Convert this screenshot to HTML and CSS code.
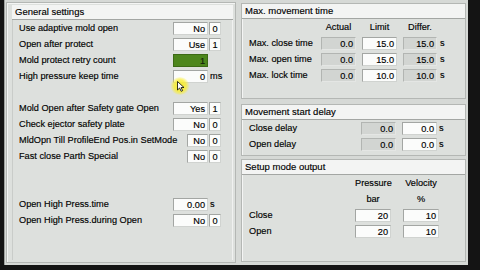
FILE: index.html
```html
<!DOCTYPE html>
<html>
<head>
<meta charset="utf-8">
<link rel="stylesheet" href="styles.css">
</head>
<body>
<div class="screen">
  <div class="desk">
    <section class="panel left">
      <div class="ph">General settings</div>
      <div class="pb">
        <div class="row"><span class="lbl">Use adaptive mold open</span><span class="vals"><span class="box wide">No</span><span class="box sm">0</span></span></div>
        <div class="row"><span class="lbl">Open after protect</span><span class="vals"><span class="box wide">Use</span><span class="box sm">1</span></span></div>
        <div class="row"><span class="lbl">Mold protect retry count</span><span class="vals"><span class="box wide green">1</span></span></div>
        <div class="row"><span class="lbl">High pressure keep time</span><span class="vals"><span class="box wide">0</span><span class="unit">ms</span></span></div>
        <div class="row"></div>
        <div class="row"><span class="lbl">Mold Open after Safety gate Open</span><span class="vals"><span class="box wide">Yes</span><span class="box sm">1</span></span></div>
        <div class="row"><span class="lbl">Check ejector safety plate</span><span class="vals"><span class="box wide">No</span><span class="box sm">0</span></span></div>
        <div class="row"><span class="lbl">MldOpn Till ProfileEnd Pos.in SetMode</span><span class="vals"><span class="box narrow">No</span><span class="box sm">0</span></span></div>
        <div class="row"><span class="lbl">Fast close Parth Special</span><span class="vals"><span class="box narrow">No</span><span class="box sm">0</span></span></div>
        <div class="row"></div>
        <div class="row"></div>
        <div class="row"><span class="lbl">Open High Press.time</span><span class="vals"><span class="box wide">0.00</span><span class="unit">s</span></span></div>
        <div class="row"><span class="lbl">Open High Press.during Open</span><span class="vals"><span class="box wide">No</span><span class="box sm">0</span></span></div>
      </div>
    </section>
    <div class="col">
      <section class="panel p1">
        <div class="ph">Max. movement time</div>
        <div class="grid g1">
          <span></span><span class="ch">Actual</span><span class="ch">Limit</span><span class="ch">Differ.</span><span></span>
          <span class="lbl">Max. close time</span><span class="box ro">0.0</span><span class="box">15.0</span><span class="box ro">15.0</span><span class="unit">s</span>
          <span class="lbl">Max. open time</span><span class="box ro">0.0</span><span class="box">15.0</span><span class="box ro">15.0</span><span class="unit">s</span>
          <span class="lbl">Max. lock time</span><span class="box ro">0.0</span><span class="box">10.0</span><span class="box ro">10.0</span><span class="unit">s</span>
        </div>
      </section>
      <section class="panel p2">
        <div class="ph">Movement start delay</div>
        <div class="grid g2">
          <span class="lbl">Close delay</span><span class="box ro">0.0</span><span class="box">0.0</span><span class="unit">s</span>
          <span class="lbl">Open delay</span><span class="box ro">0.0</span><span class="box">0.0</span><span class="unit">s</span>
        </div>
      </section>
      <section class="panel p3">
        <div class="ph">Setup mode output</div>
        <div class="grid g3">
          <span></span><span class="ch">Pressure</span><span class="ch">Velocity</span>
          <span></span><span class="ch">bar</span><span class="ch">%</span>
          <span class="lbl">Close</span><span class="box">20</span><span class="box">10</span>
          <span class="lbl">Open</span><span class="box">20</span><span class="box">10</span>
        </div>
      </section>
    </div>
  </div>
  <div class="hl"></div>
  <svg class="cursor" width="8" height="11" viewBox="0 0 8 11"><path d="M0.5 0.5 L0.5 9 L2.6 7 L4.2 10.3 L5.6 9.6 L4.1 6.5 L7 6.5 Z" fill="#fff" stroke="#000" stroke-width="0.8"/></svg>
</div>
</body>
</html>
```

FILE: styles.css
```css
* { box-sizing: border-box; }
html, body { margin: 0; padding: 0; background: #151515; }
body {
  font-family: "Liberation Sans", Arial, sans-serif;
  font-size: 9.2px;
  color: #000;
  -webkit-text-stroke: 0.15px #000;
}

.screen {
  position: relative;
  width: 480px;
  height: 270px;
  background: #141414;
  padding: 0 12px 5px 4px;
}
.desk {
  height: 100%;
  background: #d6d9d6;
  display: flex;
  gap: 5px;
  padding: 2px 2px 2px 1px;
  border-left: 1px solid #9ea19e;
}

.panel {
  background: #dde0dd;
  border: 1px solid #b4b7b4;
  box-shadow: inset 1px 1px 0 #f4f5f4;
}
.left {
  width: 231px;
  padding: 2px 2px 0 5px;
}
.ph {
  height: 15px;
  line-height: 14px;
  font-size: 9.5px;
  background: #f3f4f3;
  border-bottom: 1px solid #a3a6a3;
  padding-left: 3px;
  white-space: nowrap;
}
.left .pb {
  height: calc(100% - 17px);
  border-left: 1px solid #c9ccc9;
  border-right: 1px solid #f0f1f0;
}

.row {
  display: flex;
  align-items: center;
  height: 16px;
  padding-left: 6px;
}
.lbl { white-space: nowrap; }
.row .lbl { width: 154px; flex: none; }
.vals {
  display: flex;
  align-items: center;
  gap: 1px;
}
.box {
  display: block;
  height: 13px;
  line-height: 12px;
  text-align: right;
  padding-right: 2px;
  background: #fbfcfb;
  border: 1px solid #a3a6a3;
  border-right-color: #d0d3d0;
  border-bottom-color: #d0d3d0;
  white-space: nowrap;
}
.box.wide { width: 35px; }
.box.narrow { width: 21px; margin-left: 14px; }
.box.sm { width: 12px; text-align: center; padding-right: 0; }
.box.green { background: #4d861c; border-color: #3c6a15; color: #1b2a10; }
.box.ro { background: #d2d5d2; border-color: #b2b5b2; border-right-color: #e4e6e4; border-bottom-color: #e4e6e4; }
.unit { padding-left: 1px; }

.col {
  width: 226px;
  display: flex;
  flex-direction: column;
}
.p1 { height: 96px; margin-top: 1px; }
.p2 { height: 52px; margin-top: 5px; }
.p3 { flex: 1; margin-top: 3px; margin-bottom: 1px; }

.grid {
  display: grid;
  align-items: center;
  padding-left: 7px;
}
.grid > * { height: 16px; line-height: 16px; }
.grid > .box { height: 13px; line-height: 12px; }
.ch { text-align: center; white-space: nowrap; }
.g1 { grid-template-columns: 66px 35px 35px 34px 10px; column-gap: 6px; grid-auto-rows: 16px; }
.g1 .unit { margin-left: -4px; }
.g2 { grid-template-columns: 106px 35px 35px 10px; column-gap: 6px; grid-auto-rows: 16px; }
.g2 .unit { margin-left: -5px; }
.g3 { grid-template-columns: 94px 36px 36px; column-gap: 12px; grid-auto-rows: 16px; }

.hl {
  position: absolute;
  left: 170px;
  top: 77px;
  width: 20px;
  height: 18px;
  border-radius: 50%;
  background: radial-gradient(circle, rgba(250,238,40,0.95) 0%, rgba(250,238,40,0.75) 45%, rgba(250,238,40,0) 72%);
}
.cursor {
  position: absolute;
  left: 177px;
  top: 81px;
}
```
